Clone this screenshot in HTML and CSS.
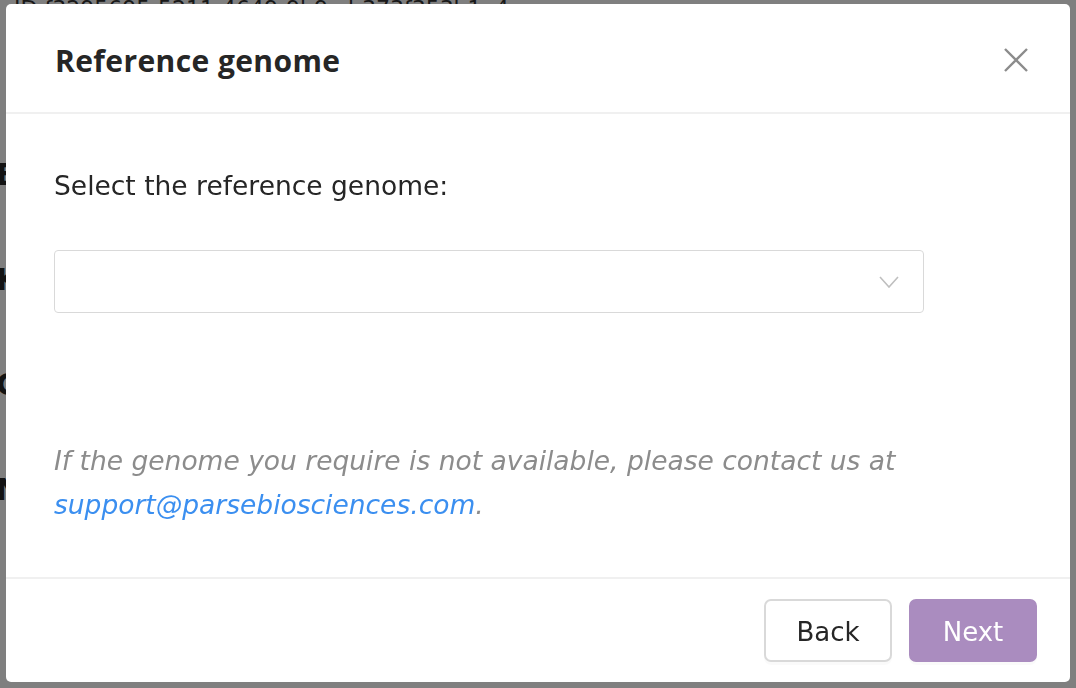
FILE: index.html
```html
<!DOCTYPE html>
<html lang="en">
<head>
  <meta charset="UTF-8">
  <title>Reference genome</title>
  <link rel="stylesheet" href="styles.css">
</head>
<body>
  <div class="page">
    <p class="page-id">ID  f3295695-5211-4649-9b9c-b373f353b1e4</p>
    <h2 class="page-title">run details</h2>
    <div class="page-row">EXPERIMENT</div>
    <div class="page-row">KIT</div>
    <div class="page-row">CHEMISTRY</div>
    <div class="page-row bold">NUMBER</div>
  </div>

  <div class="overlay">
    <div class="modal">
      <div class="modal-header">
        <h1>Reference genome</h1>
        <button class="close" aria-label="Close">
          <svg width="26" height="26" viewBox="0 0 26 26"><path d="M2 2L24 24M24 2L2 24" stroke="#8c8c8c" stroke-width="2.4" fill="none"/></svg>
        </button>
      </div>

      <div class="modal-body">
        <p class="label">Select the reference genome:</p>
        <div class="select">
          <svg class="arrow" width="20" height="12" viewBox="0 0 20 12"><path d="M1 1L10 11L19 1" stroke="#bfbfbf" stroke-width="1.6" fill="none"/></svg>
        </div>
        <p class="note">If the genome you require is not available, please contact us at <a href="#">support@parsebiosciences.com</a>.</p>
      </div>

      <div class="modal-footer">
        <button class="btn">Back</button>
        <button class="btn primary">Next</button>
      </div>
    </div>
  </div>
</body>
</html>
```

FILE: styles.css
```css
/* modal stylesheet */
body {
  margin: 0;
  font-family: 'DejaVu Sans', 'Noto Sans', sans-serif;
  color: #262626;
  background: #fff;
}

.page {
  padding: 0 14px;
}

.page-id {
  margin: 0;
  font-size: 22px;
  line-height: 18px;
  color: #333;
}

.page-title {
  margin: 34px 0 0 -6px;
  font-size: 30px;
}

.page-row {
  margin-top: 70px;
  font-size: 30px;
  font-weight: 700;
  margin-left: -18px;
}

.overlay {
  position: fixed;
  inset: 0;
  background: rgba(0, 0, 0, 0.5);
  display: flex;
  padding: 4px 6px 6px 6px;
}

.modal {
  flex: 1;
  background: #fff;
  border-radius: 5px;
  display: flex;
  flex-direction: column;
}

.modal-header {
  height: 104px;
  padding: 4px 41px 0 49px;
  border-bottom: 2px solid #f0f0f0;
  display: flex;
  align-items: center;
  justify-content: space-between;
}

.modal-header h1 {
  margin: 0;
  font-family: 'Open Sans', sans-serif;
  font-size: 30px;
  letter-spacing: 0.4px;
  font-weight: 700;
  color: #262626;
}

.close {
  border: 0;
  background: none;
  padding: 0;
  display: flex;
}

.modal-body {
  flex: 1;
  padding: 54px 48px 0;
}

.label {
  margin: 0;
  font-size: 26.5px;
  line-height: 36px;
}

.select {
  margin-top: 46px;
  width: 870px;
  height: 63px;
  border: 1px solid #d9d9d9;
  border-radius: 4px;
  display: flex;
  align-items: center;
  justify-content: flex-end;
  padding-right: 24px;
  box-sizing: border-box;
}

.note {
  margin: 126px 0 0;
  font-size: 26.5px;
  line-height: 44px;
  font-style: italic;
  color: #8c8c8c;
}

.note a {
  color: #3b8ff0;
  text-decoration: none;
}

.modal-footer {
  border-top: 2px solid #f0f0f0;
  height: 103px;
  display: flex;
  align-items: center;
  justify-content: flex-end;
  gap: 17px;
  padding-right: 33px;
}

.btn {
  width: 128px;
  height: 63px;
  padding-top: 3px;
  border: 2px solid #d9d9d9;
  border-radius: 7px;
  background: #fff;
  font-family: inherit;
  font-size: 26px;
  color: #262626;
  box-shadow: 0 3px 0 rgba(0, 0, 0, 0.02);
}

.btn.primary {
  background: #aa8cbf;
  border-color: #aa8cbf;
  color: #fff;
}
```
